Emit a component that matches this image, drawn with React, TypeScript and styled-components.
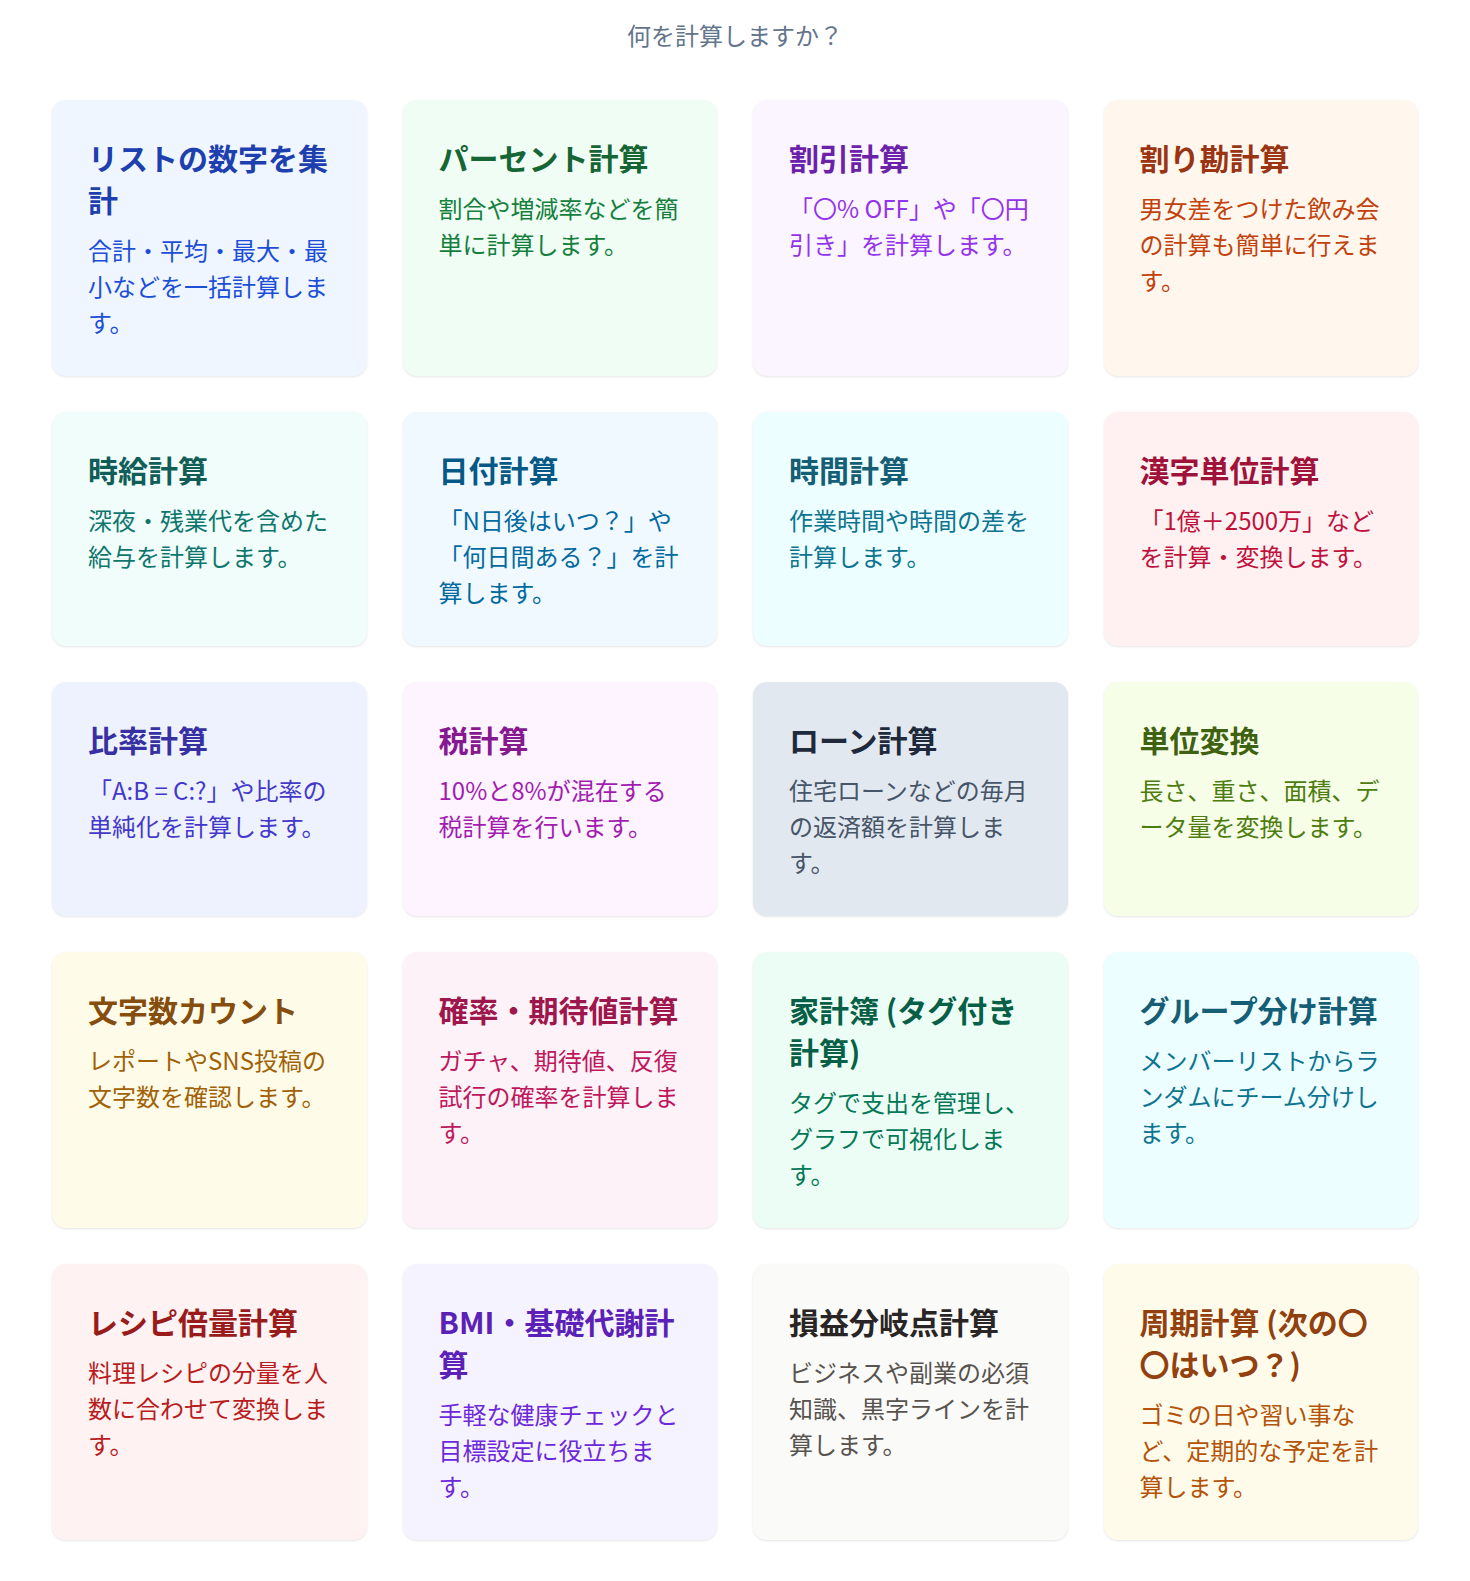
import React from "react";
import styled, { createGlobalStyle } from "styled-components";

const GlobalStyle = createGlobalStyle`
  html, body {
    margin: 0;
    padding: 0;
    background: #ffffff;
  }
  body {
    font-family: "Noto Sans CJK JP", "Noto Sans", sans-serif;
    -webkit-font-smoothing: antialiased;
  }
  * { box-sizing: border-box; }
`;

const Page = styled.main`
  padding: 17px 0 40px;
`;

const Heading = styled.h2`
  margin: 0 0 47px;
  text-align: center;
  font-size: 24px;
  line-height: 36px;
  font-weight: 400;
  color: #64748b;
`;

const Grid = styled.div`
  width: 1366px;
  margin: 0 auto;
  display: grid;
  grid-template-columns: repeat(4, 1fr);
  gap: 36px;
`;

type Tone = { bg: string; title: string; text: string };

const Card = styled.a<{ $tone: Tone }>`
  display: flex;
  flex-direction: column;
  gap: 12px;
  padding: 36px;
  border-radius: 14px;
  background: ${(p) => p.$tone.bg};
  box-shadow: 0 1px 3px rgba(0, 0, 0, 0.07), 0 1px 2px rgba(0, 0, 0, 0.04);
  text-decoration: none;
  cursor: pointer;
`;

const Title = styled.h3<{ $color: string }>`
  margin: 0;
  font-size: 30px;
  line-height: 42px;
  font-weight: 700;
  color: ${(p) => p.$color};
`;

const Desc = styled.p<{ $color: string }>`
  margin: 0;
  font-size: 24px;
  line-height: 36px;
  font-weight: 400;
  color: ${(p) => p.$color};
`;

const tones: Record<string, Tone> = {
  blue: { bg: "#eff6ff", title: "#1e40af", text: "#1d4ed8" },
  green: { bg: "#f0fdf4", title: "#166534", text: "#15803d" },
  purple: { bg: "#faf5ff", title: "#6b21a8", text: "#9333ea" },
  orange: { bg: "#fff7ed", title: "#9a3412", text: "#c2410c" },
  teal: { bg: "#f0fdfa", title: "#115e59", text: "#0f766e" },
  sky: { bg: "#f0f9ff", title: "#075985", text: "#0369a1" },
  cyan: { bg: "#ecfeff", title: "#155e75", text: "#0e7490" },
  rose: { bg: "#fff1f2", title: "#9f1239", text: "#be123c" },
  indigo: { bg: "#eef2ff", title: "#3730a3", text: "#4338ca" },
  fuchsia: { bg: "#fdf4ff", title: "#86198f", text: "#a21caf" },
  slate: { bg: "#e2e8f0", title: "#1e293b", text: "#475569" },
  lime: { bg: "#f7fee7", title: "#3f6212", text: "#4d7c0f" },
  yellow: { bg: "#fefce8", title: "#854d0e", text: "#a16207" },
  pink: { bg: "#fdf2f8", title: "#9d174d", text: "#be185d" },
  emerald: { bg: "#ecfdf5", title: "#065f46", text: "#047857" },
  red: { bg: "#fef2f2", title: "#991b1b", text: "#b91c1c" },
  violet: { bg: "#f5f3ff", title: "#5b21b6", text: "#6d28d9" },
  stone: { bg: "#fafaf9", title: "#292524", text: "#57534e" },
  amber: { bg: "#fffbeb", title: "#92400e", text: "#b45309" },
};

const items: { title: string; desc: string; tone: string }[] = [
  { title: "リストの数字を集計", desc: "合計・平均・最大・最小などを一括計算します。", tone: "blue" },
  { title: "パーセント計算", desc: "割合や増減率などを簡単に計算します。", tone: "green" },
  { title: "割引計算", desc: "「〇% OFF」や「〇円引き」を計算します。", tone: "purple" },
  { title: "割り勘計算", desc: "男女差をつけた飲み会の計算も簡単に行えます。", tone: "orange" },
  { title: "時給計算", desc: "深夜・残業代を含めた給与を計算します。", tone: "teal" },
  { title: "日付計算", desc: "「N日後はいつ？」や「何日間ある？」を計算します。", tone: "sky" },
  { title: "時間計算", desc: "作業時間や時間の差を計算します。", tone: "cyan" },
  { title: "漢字単位計算", desc: "「1億＋2500万」などを計算・変換します。", tone: "rose" },
  { title: "比率計算", desc: "「A:B = C:?」や比率の単純化を計算します。", tone: "indigo" },
  { title: "税計算", desc: "10%と8%が混在する税計算を行います。", tone: "fuchsia" },
  { title: "ローン計算", desc: "住宅ローンなどの毎月の返済額を計算します。", tone: "slate" },
  { title: "単位変換", desc: "長さ、重さ、面積、データ量を変換します。", tone: "lime" },
  { title: "文字数カウント", desc: "レポートやSNS投稿の文字数を確認します。", tone: "yellow" },
  { title: "確率・期待値計算", desc: "ガチャ、期待値、反復試行の確率を計算します。", tone: "pink" },
  { title: "家計簿 (タグ付き計算)", desc: "タグで支出を管理し、グラフで可視化します。", tone: "emerald" },
  { title: "グループ分け計算", desc: "メンバーリストからランダムにチーム分けします。", tone: "cyan" },
  { title: "レシピ倍量計算", desc: "料理レシピの分量を人数に合わせて変換します。", tone: "red" },
  { title: "BMI・基礎代謝計算", desc: "手軽な健康チェックと目標設定に役立ちます。", tone: "violet" },
  { title: "損益分岐点計算", desc: "ビジネスや副業の必須知識、黒字ラインを計算します。", tone: "stone" },
  { title: "周期計算 (次の〇〇はいつ？)", desc: "ゴミの日や習い事など、定期的な予定を計算します。", tone: "amber" },
];

export default function App() {
  return (
    <>
      <GlobalStyle />
      <Page>
        <Heading>何を計算しますか？</Heading>
        <Grid>
          {items.map((it) => {
            const tone = tones[it.tone];
            return (
              <Card key={it.title} $tone={tone}>
                <Title $color={tone.title}>{it.title}</Title>
                <Desc $color={tone.text}>{it.desc}</Desc>
              </Card>
            );
          })}
        </Grid>
      </Page>
    </>
  );
}
